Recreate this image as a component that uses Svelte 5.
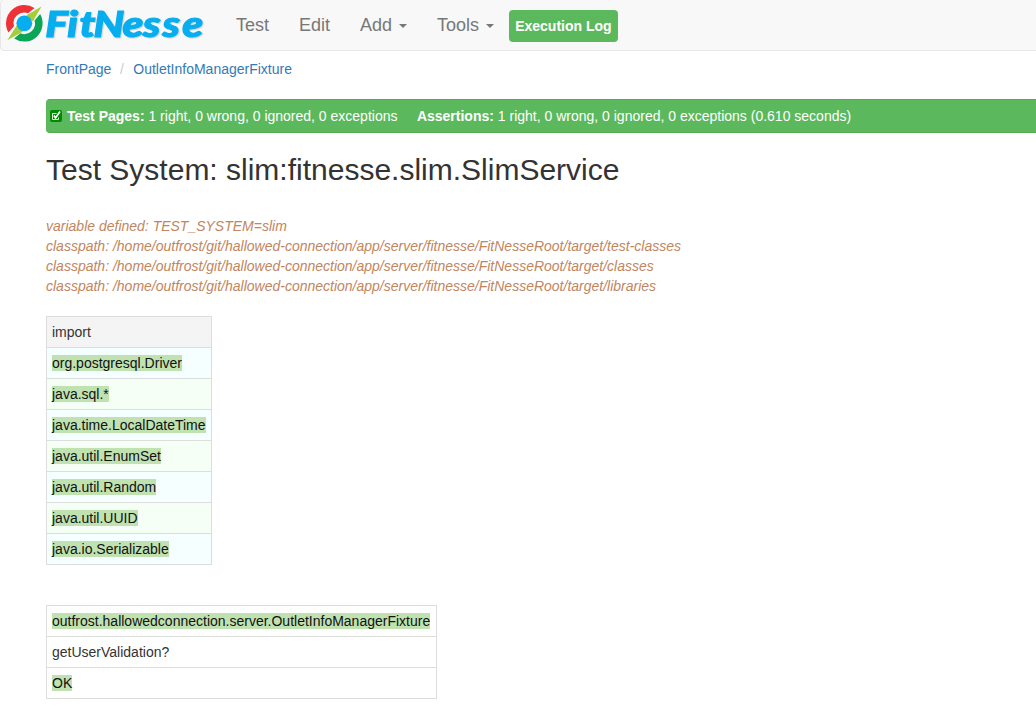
<script>
  const menu = [
    { label: 'Test' },
    { label: 'Edit' },
    { label: 'Add', caret: true },
    { label: 'Tools', caret: true },
  ];
  const root = '/home/outfrost/git/hallowed-connection/app/server/fitnesse/FitNesseRoot/target/';
  const classpaths = ['test-classes', 'classes', 'libraries'];
  const imports = [
    'org.postgresql.Driver',
    'java.sql.*',
    'java.time.LocalDateTime',
    'java.util.EnumSet',
    'java.util.Random',
    'java.util.UUID',
    'java.io.Serializable',
  ];
</script>

<nav>
  <a class="brand" href="#home" aria-label="FitNesse">
    <svg width="210" height="50" viewBox="0 0 210 50">
      <path d="M8.500 32.500A18.300 18.300 0 0 1 34.500 8.100L28.200 13.300A10.700 10.700 0 0 0 14 26.200Z" fill="#ee3338" />
      <path d="M40.100 14.100A18.300 18.300 0 0 1 14.100 38.500L20.400 33.300A10.700 10.700 0 0 0 34.600 20.400Z" fill="#0ba556" />
      <path d="M41.500 6.500L26.500 15.300L32.800 21.500ZM7.300 40.300L16.700 25.500L23 31.500Z" fill="#a6ce39" />
      <circle cx="24.300" cy="23.300" r="7.900" fill="#06aeef" />
      <text transform="scale(1.17 1)" x="38.700 57.400 67.900 80 104.700 122.300 139 155.700" y="37.100">FitNesse</text>
    </svg>
  </a>
  <ul>
    {#each menu as item}
      <li><a href="#menu">{item.label}{#if item.caret}{' '}<b class="caret"></b>{/if}</a></li>
    {/each}
  </ul>
  <a class="log" href="#log">Execution Log</a>
</nav>

<article>
  <ol class="breadcrumb">
    <li><a href="#front">FrontPage</a></li>
    <li><a href="#fixture">OutletInfoManagerFixture</a></li>
  </ol>

  <div class="summary">
    <svg class="check" width="12" height="12" viewBox="0 0 12 12">
      <rect width="12" height="12" rx="2" fill="#008c00" />
      <path d="M6.500 3.500H2.500V9.500H8.500V7.500" fill="none" stroke="#d8efd8" />
      <path d="M4 5.500L5.500 8L10 1.500" fill="none" stroke="#fff" stroke-width="1.700" />
    </svg>
    <span class="pages"><strong>Test Pages:</strong> 1 right, 0 wrong, 0 ignored, 0 exceptions</span>
    <span><strong>Assertions:</strong> 1 right, 0 wrong, 0 ignored, 0 exceptions (0.610 seconds)</span>
  </div>

  <h2>Test System: slim:fitnesse.slim.SlimService</h2>

  <div class="meta">
    <div>variable defined: TEST_SYSTEM=slim</div>
    {#each classpaths as path}
      <div>classpath: {root}{path}</div>
    {/each}
  </div>

  <table class="imports">
    <tbody>
      <tr><td>import</td></tr>
      {#each imports as name}
        <tr><td><span class="pass">{name}</span></td></tr>
      {/each}
    </tbody>
  </table>

  <table class="fixture">
    <tbody>
      <tr><td><span class="pass">outfrost.hallowedconnection.server.OutletInfoManagerFixture</span></td></tr>
      <tr><td>getUserValidation?</td></tr>
      <tr><td><span class="pass">OK</span></td></tr>
    </tbody>
  </table>
</article>

<style>
  :global(html) { overflow: hidden; }
  :global(body) {
    margin: 0;
    background: #fff;
    color: #333;
    font: 14px/20px "Liberation Sans", Arial, sans-serif;
  }
  a { color: #337ab7; text-decoration: none; }
  nav {
    box-sizing: border-box;
    display: flex;
    height: 52px;
    margin: -1px -10px 0 0;
    border: 1px solid #e7e7e7;
    border-radius: 4px;
    background: #f8f8f8;
  }
  .brand { width: 221px; margin-left: -1px; }
  .brand svg { display: block; overflow: visible; }
  .brand text {
    font: italic 900 36.5px Lato, sans-serif;
    fill: #06aeef;
    stroke: #06aeef;
    stroke-width: 1.1px;
    filter: drop-shadow(1px 1px 0.5px #0002);
  }
  ul, ol { display: flex; margin: 0; padding: 0; list-style: none; }
  ul a {
    display: block;
    padding: 15px;
    color: #777;
    font-size: 18px;
    line-height: 20px;
  }
  .caret {
    display: inline-block;
    margin-left: 2px;
    vertical-align: middle;
    border: 4px solid transparent;
    border-top-color: currentColor;
    border-bottom: 0;
  }
  .log {
    box-sizing: border-box;
    height: 32px;
    margin-top: 10px;
    padding: 6px;
    border-radius: 4px;
    background: #5cb85c;
    color: #fff;
    font-weight: bold;
  }
  article { padding: 8px 0 0 46px; }
  .breadcrumb li + li::before { content: "/"; padding: 0 9.4px 0 8.6px; color: #ccc; }
  .summary {
    box-sizing: border-box;
    display: flex;
    align-items: center;
    height: 34px;
    margin: 20px -10px 0 0;
    padding-left: 4px;
    border: 1px solid #54ab54;
    border-width: 1px 0;
    border-radius: 4px;
    background: #5cb85c;
    color: #fff;
    white-space: nowrap;
  }
  .check { margin-right: 5px; }
  .pages { margin-right: 19.4px; }
  h2 { margin: 20px 0 30px; font-size: 30px; font-weight: 500; line-height: 33px; }
  .meta { color: #bf8660; font-style: italic; white-space: nowrap; }
  table { margin-top: 20px; border-collapse: collapse; border-spacing: 0; }
  .fixture { width: 391px; margin-top: 40px; }
  td { padding: 5px; border: 1px solid #ddd; line-height: 20px; }
  .imports tr:nth-child(odd) { background: #f5fff5; }
  .imports tr:nth-child(even) { background: #f5ffff; }
  .imports tr:first-child { background: #f4f4f4; }
  .pass { background: #c0e2b1; color: #111; }
</style>
